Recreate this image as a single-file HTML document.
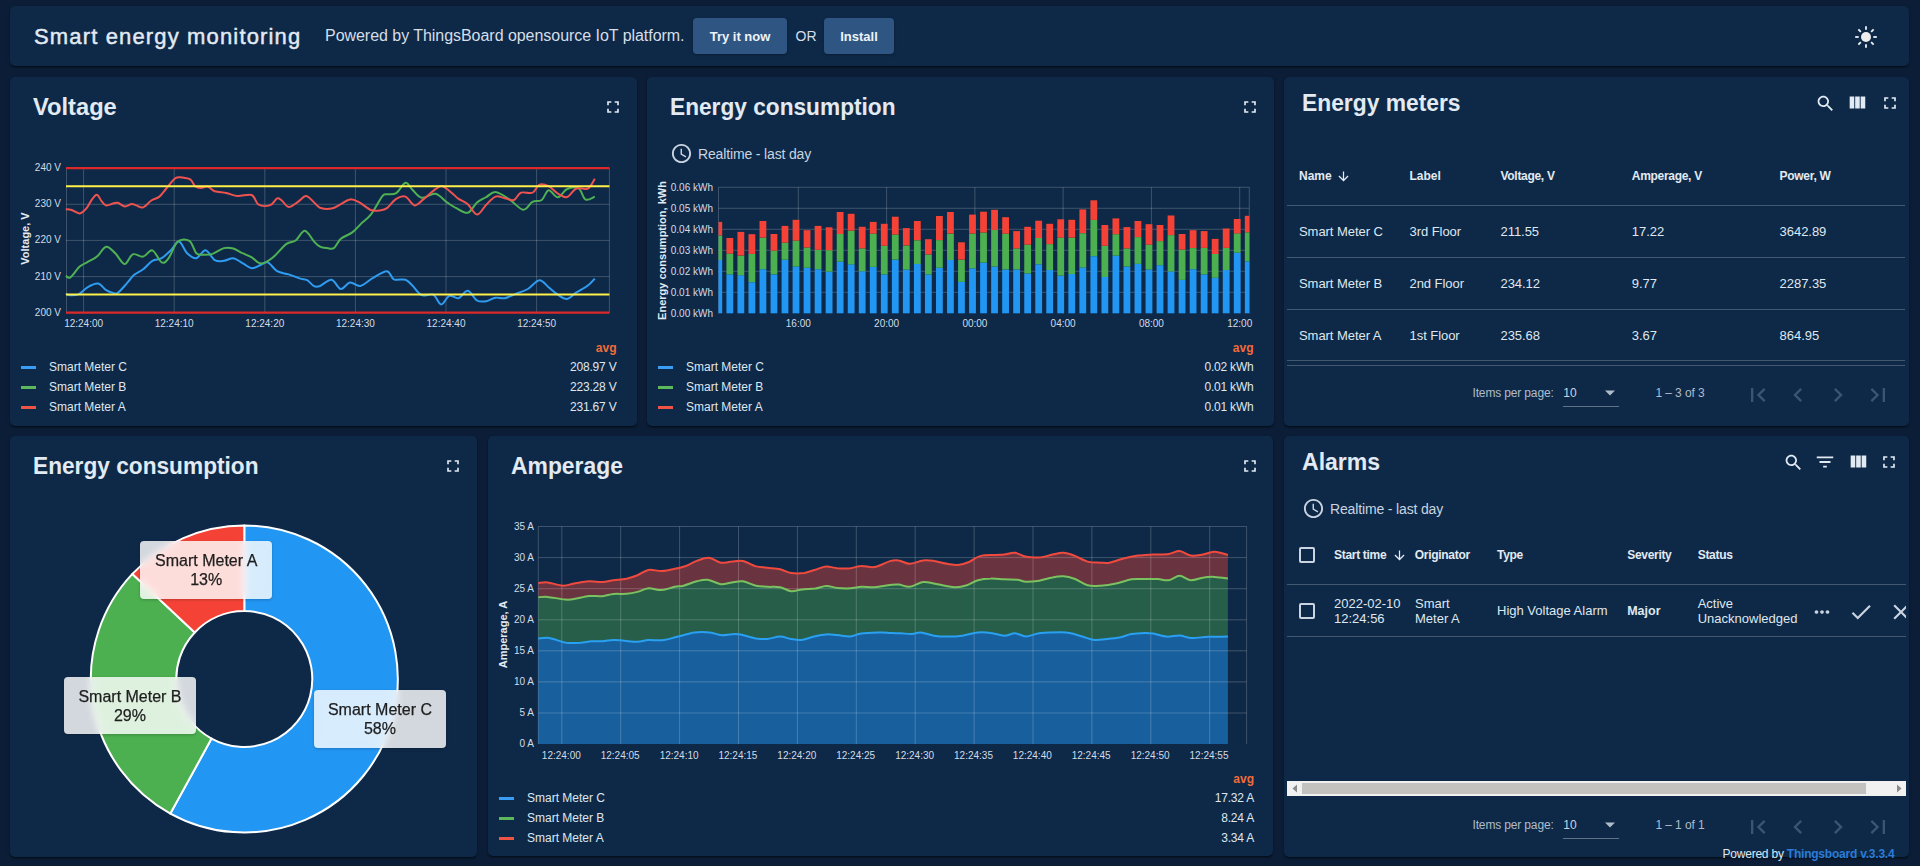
<!DOCTYPE html><html><head><meta charset="utf-8"><title>Smart energy monitoring</title><style>
html,body{margin:0;padding:0;}
body{width:1920px;height:866px;overflow:hidden;background:#0c1e37;font-family:"Liberation Sans", sans-serif;position:relative;}
.card{position:absolute;background:#0e2947;border-radius:5px;box-shadow:0 2px 2px -1px rgba(0,0,0,0.5),0 1px 3px rgba(0,0,0,0.3);}
.t{position:absolute;white-space:nowrap;line-height:1;}
.ic{position:absolute;}
.rot{transform:rotate(-90deg);}
.lg{position:absolute;width:15px;height:3px;}
.hl{position:absolute;height:1px;background:rgba(255,255,255,0.22);}
.cb{position:absolute;width:12px;height:12px;border:2px solid #c9d4e0;border-radius:2px;}
.pl{position:absolute;background:rgba(255,255,255,0.82);border-radius:4px;color:#1e1e1e;-webkit-text-stroke:0.25px #1e1e1e;backdrop-filter:blur(3px);box-shadow:0 1px 3px rgba(0,0,0,0.2);}
.yl{position:absolute;font-size:10px;line-height:12px;color:#d2dce7;white-space:nowrap;}
.xl{position:absolute;width:60px;text-align:center;font-size:10px;line-height:12px;color:#d2dce7;white-space:nowrap;}
.btn{position:absolute;background:#2f5683;border-radius:4px;box-shadow:0 1px 3px rgba(0,0,0,0.3);}
</style></head><body><div class="card" style="left:10px;top:6px;width:1899px;height:60px"></div>
<div class="card" style="left:10px;top:77px;width:627px;height:349px"></div>
<div class="card" style="left:647px;top:77px;width:627px;height:349px"></div>
<div class="card" style="left:1284px;top:77px;width:625px;height:349px"></div>
<div class="card" style="left:10px;top:436px;width:467px;height:421px"></div>
<div class="card" style="left:488px;top:436px;width:785px;height:420px"></div>
<div class="card" style="left:1284px;top:436px;width:625px;height:421px"></div>
<svg style="position:absolute;left:0;top:0" width="1920" height="866" viewBox="0 0 1920 866"><defs><clipPath id="bclip"><rect x="718.5" y="180" width="530.8" height="140"/></clipPath></defs><line x1="66" y1="204.3" x2="609.4" y2="204.3" stroke="rgba(255,255,255,0.2)" stroke-width="1"/>
<line x1="66" y1="240.4" x2="609.4" y2="240.4" stroke="rgba(255,255,255,0.2)" stroke-width="1"/>
<line x1="66" y1="276.6" x2="609.4" y2="276.6" stroke="rgba(255,255,255,0.2)" stroke-width="1"/>
<line x1="83.6" y1="168" x2="83.6" y2="313" stroke="rgba(255,255,255,0.2)" stroke-width="1"/>
<line x1="174.2" y1="168" x2="174.2" y2="313" stroke="rgba(255,255,255,0.2)" stroke-width="1"/>
<line x1="264.8" y1="168" x2="264.8" y2="313" stroke="rgba(255,255,255,0.2)" stroke-width="1"/>
<line x1="355.4" y1="168" x2="355.4" y2="313" stroke="rgba(255,255,255,0.2)" stroke-width="1"/>
<line x1="446.0" y1="168" x2="446.0" y2="313" stroke="rgba(255,255,255,0.2)" stroke-width="1"/>
<line x1="536.6" y1="168" x2="536.6" y2="313" stroke="rgba(255,255,255,0.2)" stroke-width="1"/>
<line x1="66.5" y1="168" x2="66.5" y2="313" stroke="rgba(255,255,255,0.2)" stroke-width="1"/>
<line x1="609.4" y1="168" x2="609.4" y2="313" stroke="rgba(255,255,255,0.2)" stroke-width="1"/>
<path d="M65.8 293.6 C66.4 293.8 67.2 295.1 69.3 295.2 C71.4 295.3 75.4 295.6 78.5 294.3 C81.6 292.9 84.5 288.9 87.8 287.1 C91.0 285.3 95.1 283.1 98.2 283.6 C101.2 284.1 103.7 288.6 106.2 290.1 C108.7 291.7 111.2 292.4 113.2 292.9 C115.1 293.3 115.5 294.5 117.8 292.9 C120.1 291.3 124.3 286.2 127.0 283.2 C129.7 280.2 131.3 277.4 133.9 275.1 C136.6 272.8 140.1 271.7 143.2 269.3 C146.3 266.9 149.3 262.6 152.4 260.8 C155.5 258.9 158.6 260.0 161.7 258.2 C164.7 256.5 168.0 252.9 170.9 250.2 C173.8 247.4 176.3 241.1 179.0 241.6 C181.7 242.1 184.2 250.4 187.1 253.2 C190.0 255.9 193.2 258.7 196.3 258.2 C199.4 257.7 202.5 249.9 205.5 250.2 C208.6 250.5 211.7 258.3 214.8 260.1 C217.9 261.9 220.9 261.1 224.0 260.8 C227.1 260.5 230.2 257.9 233.3 258.2 C236.3 258.6 239.4 261.4 242.5 263.1 C245.6 264.7 248.7 267.9 251.7 268.2 C254.8 268.4 258.3 265.7 261.0 264.7 C263.7 263.7 265.2 261.3 267.9 262.4 C270.6 263.5 273.7 269.2 277.1 271.2 C280.6 273.2 284.8 273.2 288.7 274.4 C292.5 275.6 297.2 277.6 300.2 278.6 C303.3 279.5 304.8 278.9 307.2 280.2 C309.5 281.5 311.9 285.2 314.1 286.2 C316.2 287.2 317.1 287.0 320.0 286.0 C322.9 284.9 328.1 279.2 331.5 279.7 C335.0 280.2 337.7 288.5 340.8 289.0 C343.9 289.4 346.8 283.0 350.0 282.5 C353.3 282.0 356.6 286.7 360.4 286.0 C364.3 285.2 368.7 280.3 373.1 277.9 C377.5 275.4 383.5 270.9 387.0 271.2 C390.4 271.4 390.8 277.8 393.9 279.3 C397.0 280.7 402.4 278.7 405.5 279.7 C408.5 280.8 409.7 282.9 412.4 285.5 C415.1 288.1 418.2 293.7 421.6 295.2 C425.1 296.7 429.9 293.2 433.2 294.7 C436.4 296.3 438.6 304.2 441.2 304.4 C443.9 304.6 446.4 296.9 449.3 295.9 C452.2 294.8 455.5 299.0 458.6 298.2 C461.6 297.4 464.7 290.4 467.8 290.8 C470.9 291.2 474.0 298.8 477.0 300.5 C480.1 302.2 483.2 301.7 486.3 301.2 C489.4 300.7 492.4 298.2 495.5 297.7 C498.6 297.2 501.3 298.9 504.8 298.2 C508.2 297.5 512.5 295.1 516.3 293.6 C520.2 292.0 524.0 291.2 527.9 289.0 C531.7 286.7 535.9 280.5 539.4 280.2 C542.9 279.9 545.6 284.9 548.6 287.3 C551.7 289.8 554.8 292.8 557.9 294.7 C561.0 296.7 564.0 299.3 567.1 298.9 C570.2 298.5 572.9 294.7 576.4 292.4 C579.8 290.2 584.8 287.8 587.9 285.5 C591.0 283.2 593.7 279.7 594.8 278.6" fill="none" stroke="#2f9cf2" stroke-width="2" stroke-linejoin="round"/>
<path d="M65.8 275.8 C66.6 276.1 68.1 279.0 70.4 277.4 C72.7 275.9 76.8 269.1 79.7 266.6 C82.6 264.0 84.9 263.6 87.8 261.9 C90.6 260.3 93.9 259.2 97.0 256.6 C100.1 254.1 103.2 247.2 106.2 246.7 C109.3 246.2 112.4 250.7 115.5 253.6 C118.6 256.5 121.8 263.9 124.7 264.0 C127.6 264.1 129.7 255.6 132.8 254.3 C135.9 253.1 139.9 257.3 143.2 256.6 C146.5 256.0 149.3 249.4 152.4 250.4 C155.5 251.4 159.0 261.1 161.7 262.4 C164.4 263.7 165.9 261.7 168.6 258.2 C171.3 254.8 174.4 244.5 177.8 241.6 C181.3 238.7 186.3 239.0 189.4 240.9 C192.5 242.8 194.0 250.9 196.3 253.2 C198.6 255.5 200.5 254.7 203.2 254.8 C205.9 254.9 209.0 255.0 212.5 253.9 C215.9 252.7 220.6 249.0 224.0 248.1 C227.5 247.2 230.2 247.7 233.3 248.5 C236.3 249.4 239.4 251.7 242.5 253.2 C245.6 254.6 248.7 255.6 251.7 257.3 C254.8 259.1 257.5 263.5 261.0 263.6 C264.4 263.6 268.3 261.1 272.5 257.8 C276.8 254.5 282.5 246.8 286.4 243.9 C290.2 241.0 292.5 242.7 295.6 240.5 C298.7 238.3 301.8 230.6 304.8 230.8 C307.9 231.0 311.6 239.0 314.1 241.6 C316.6 244.3 317.9 245.6 320.0 246.7 C322.1 247.8 324.6 247.9 326.9 248.1 C329.2 248.3 331.5 249.6 333.9 248.1 C336.2 246.5 337.7 241.5 340.8 238.8 C343.9 236.2 348.9 235.0 352.3 232.4 C355.8 229.8 358.5 226.1 361.6 223.1 C364.6 220.2 367.3 219.1 370.8 214.6 C374.3 210.1 379.7 199.5 382.4 196.1 C385.1 192.7 384.7 194.8 387.0 194.3 C389.3 193.8 393.1 195.0 396.2 193.1 C399.3 191.2 402.8 183.3 405.5 182.7 C408.1 182.1 409.7 187.2 412.4 189.7 C415.1 192.2 417.8 197.0 421.6 197.7 C425.5 198.4 431.2 193.0 435.5 193.8 C439.7 194.6 443.6 200.0 447.0 202.4 C450.5 204.7 452.8 206.4 456.3 208.1 C459.7 209.9 464.3 213.7 467.8 212.7 C471.3 211.8 474.0 205.0 477.0 202.4 C480.1 199.7 483.2 198.8 486.3 197.0 C489.4 195.3 491.7 191.6 495.5 192.0 C499.4 192.3 504.8 196.4 509.4 199.4 C514.0 202.3 519.4 209.3 523.2 209.7 C527.1 210.2 529.4 203.5 532.5 201.9 C535.6 200.3 539.0 202.0 541.7 200.0 C544.4 198.1 545.9 190.8 548.6 190.3 C551.3 189.9 554.8 197.5 557.9 197.3 C561.0 197.0 563.6 190.4 567.1 189.0 C570.6 187.5 575.6 186.7 578.7 188.5 C581.7 190.3 582.9 198.2 585.6 199.6 C588.3 200.9 593.3 197.1 594.8 196.6" fill="none" stroke="#4fb153" stroke-width="2" stroke-linejoin="round"/>
<path d="M65.8 209.3 C66.8 209.4 69.3 209.3 71.6 210.0 C73.9 210.7 77.2 213.7 79.7 213.4 C82.2 213.1 84.5 210.6 86.6 208.1 C88.7 205.7 90.6 201.1 92.4 198.9 C94.1 196.7 95.5 194.3 97.0 194.7 C98.5 195.1 100.1 199.4 101.6 201.2 C103.2 203.0 104.3 205.0 106.2 205.4 C108.2 205.7 111.2 203.9 113.2 203.5 C115.1 203.1 115.9 202.3 117.8 202.8 C119.7 203.3 122.4 206.3 124.7 206.5 C127.0 206.7 129.7 204.2 131.6 204.0 C133.6 203.8 134.3 204.8 136.3 205.4 C138.2 205.9 140.7 208.2 143.2 207.4 C145.7 206.6 148.6 202.3 151.3 200.5 C154.0 198.7 156.9 198.6 159.4 196.6 C161.9 194.6 163.6 191.6 166.3 188.5 C169.0 185.4 172.8 179.9 175.5 178.1 C178.2 176.3 179.9 177.4 182.4 177.6 C184.9 177.9 188.4 178.3 190.5 179.7 C192.6 181.1 193.4 184.8 195.2 186.2 C196.9 187.6 198.8 188.0 200.9 188.0 C203.0 188.1 205.5 186.1 207.9 186.7 C210.2 187.2 211.7 190.2 214.8 191.3 C217.9 192.3 222.5 192.3 226.3 193.1 C230.2 193.9 233.6 195.8 237.9 196.1 C242.1 196.4 248.3 193.5 251.7 195.0 C255.2 196.4 255.6 203.0 258.7 204.7 C261.7 206.4 267.1 206.2 270.2 205.1 C273.3 204.1 275.2 199.2 277.1 198.4 C279.1 197.7 279.8 199.1 281.8 200.5 C283.7 201.9 286.0 206.7 288.7 207.0 C291.4 207.2 295.0 203.7 297.9 201.9 C300.8 200.1 303.3 196.0 306.0 196.1 C308.7 196.2 311.8 200.4 314.1 202.4 C316.4 204.3 317.1 206.6 320.0 207.7 C322.9 208.7 328.1 209.2 331.5 208.6 C335.0 208.0 337.7 205.7 340.8 204.2 C343.9 202.7 346.9 199.7 350.0 199.4 C353.1 199.0 355.8 200.6 359.3 202.4 C362.7 204.1 367.3 208.6 370.8 210.0 C374.3 211.3 377.4 210.7 380.0 210.4 C382.7 210.1 384.3 210.1 387.0 208.1 C389.7 206.2 393.1 200.8 396.2 198.9 C399.3 197.0 402.4 195.5 405.5 196.6 C408.5 197.7 411.6 205.0 414.7 205.4 C417.8 205.7 420.5 201.6 423.9 198.9 C427.4 196.2 432.4 191.3 435.5 189.2 C438.6 187.1 439.7 185.6 442.4 186.2 C445.1 186.8 448.9 190.5 451.6 192.7 C454.3 194.8 455.9 197.0 458.6 198.9 C461.3 200.8 464.7 201.6 467.8 204.2 C470.9 206.8 474.0 214.5 477.0 214.6 C480.1 214.7 483.2 207.7 486.3 204.7 C489.4 201.7 492.4 197.7 495.5 196.6 C498.6 195.5 501.7 197.6 504.8 198.2 C507.8 198.8 511.3 201.0 514.0 200.0 C516.7 199.1 517.8 193.9 520.9 192.7 C524.0 191.4 529.4 194.0 532.5 192.7 C535.6 191.3 536.7 185.7 539.4 184.6 C542.1 183.5 545.6 184.7 548.6 186.2 C551.7 187.7 554.8 191.8 557.9 193.6 C561.0 195.4 564.0 197.9 567.1 197.0 C570.2 196.2 572.9 189.9 576.4 188.5 C579.8 187.1 584.8 190.1 587.9 188.5 C591.0 186.9 593.7 180.4 594.8 178.8" fill="none" stroke="#ef5350" stroke-width="2" stroke-linejoin="round"/>
<line x1="66" y1="186.3" x2="609.4" y2="186.3" stroke="#fff04a" stroke-width="2"/>
<line x1="66" y1="294.6" x2="609.4" y2="294.6" stroke="#fff04a" stroke-width="2"/>
<line x1="66" y1="168.2" x2="609.4" y2="168.2" stroke="#dc2a2a" stroke-width="2.2"/>
<line x1="66" y1="312.7" x2="609.4" y2="312.7" stroke="#dc2a2a" stroke-width="2.2"/>
<line x1="718.5" y1="292.3" x2="1249.3" y2="292.3" stroke="rgba(255,255,255,0.2)" stroke-width="1"/>
<line x1="718.5" y1="271.3" x2="1249.3" y2="271.3" stroke="rgba(255,255,255,0.2)" stroke-width="1"/>
<line x1="718.5" y1="250.3" x2="1249.3" y2="250.3" stroke="rgba(255,255,255,0.2)" stroke-width="1"/>
<line x1="718.5" y1="229.3" x2="1249.3" y2="229.3" stroke="rgba(255,255,255,0.2)" stroke-width="1"/>
<line x1="718.5" y1="208.3" x2="1249.3" y2="208.3" stroke="rgba(255,255,255,0.2)" stroke-width="1"/>
<line x1="718.5" y1="187.3" x2="1249.3" y2="187.3" stroke="rgba(255,255,255,0.2)" stroke-width="1"/>
<line x1="798.3" y1="187.3" x2="798.3" y2="313.3" stroke="rgba(255,255,255,0.2)" stroke-width="1"/>
<line x1="886.6" y1="187.3" x2="886.6" y2="313.3" stroke="rgba(255,255,255,0.2)" stroke-width="1"/>
<line x1="974.9" y1="187.3" x2="974.9" y2="313.3" stroke="rgba(255,255,255,0.2)" stroke-width="1"/>
<line x1="1063.1" y1="187.3" x2="1063.1" y2="313.3" stroke="rgba(255,255,255,0.2)" stroke-width="1"/>
<line x1="1151.4" y1="187.3" x2="1151.4" y2="313.3" stroke="rgba(255,255,255,0.2)" stroke-width="1"/>
<line x1="1239.7" y1="187.3" x2="1239.7" y2="313.3" stroke="rgba(255,255,255,0.2)" stroke-width="1"/>
<line x1="718.5" y1="187.3" x2="718.5" y2="313.3" stroke="rgba(255,255,255,0.2)"/>
<line x1="1249.3" y1="187.3" x2="1249.3" y2="313.3" stroke="rgba(255,255,255,0.2)"/>
<g clip-path="url(#bclip)">
<rect x="715.40" y="260.0" width="6.8" height="53.3" fill="#2196f3"/>
<rect x="715.40" y="235.4" width="6.8" height="24.6" fill="#4caf50"/>
<rect x="715.40" y="221.9" width="6.8" height="13.5" fill="#f44336"/>
<rect x="726.43" y="274.4" width="6.8" height="38.9" fill="#2196f3"/>
<rect x="726.43" y="253.6" width="6.8" height="20.8" fill="#4caf50"/>
<rect x="726.43" y="238.0" width="6.8" height="15.6" fill="#f44336"/>
<rect x="737.46" y="275.2" width="6.8" height="38.1" fill="#2196f3"/>
<rect x="737.46" y="255.7" width="6.8" height="19.6" fill="#4caf50"/>
<rect x="737.46" y="231.9" width="6.8" height="23.7" fill="#f44336"/>
<rect x="748.49" y="282.2" width="6.8" height="31.1" fill="#2196f3"/>
<rect x="748.49" y="253.9" width="6.8" height="28.2" fill="#4caf50"/>
<rect x="748.49" y="234.2" width="6.8" height="19.7" fill="#f44336"/>
<rect x="759.52" y="269.2" width="6.8" height="44.1" fill="#2196f3"/>
<rect x="759.52" y="237.7" width="6.8" height="31.5" fill="#4caf50"/>
<rect x="759.52" y="221.0" width="6.8" height="16.6" fill="#f44336"/>
<rect x="770.55" y="274.4" width="6.8" height="38.9" fill="#2196f3"/>
<rect x="770.55" y="250.6" width="6.8" height="23.7" fill="#4caf50"/>
<rect x="770.55" y="234.0" width="6.8" height="16.6" fill="#f44336"/>
<rect x="781.58" y="259.7" width="6.8" height="53.6" fill="#2196f3"/>
<rect x="781.58" y="242.7" width="6.8" height="17.0" fill="#4caf50"/>
<rect x="781.58" y="225.9" width="6.8" height="16.8" fill="#f44336"/>
<rect x="792.61" y="266.6" width="6.8" height="46.7" fill="#2196f3"/>
<rect x="792.61" y="240.6" width="6.8" height="26.0" fill="#4caf50"/>
<rect x="792.61" y="219.8" width="6.8" height="20.8" fill="#f44336"/>
<rect x="803.64" y="267.8" width="6.8" height="45.5" fill="#2196f3"/>
<rect x="803.64" y="247.5" width="6.8" height="20.3" fill="#4caf50"/>
<rect x="803.64" y="230.2" width="6.8" height="17.3" fill="#f44336"/>
<rect x="814.67" y="269.2" width="6.8" height="44.1" fill="#2196f3"/>
<rect x="814.67" y="249.8" width="6.8" height="19.4" fill="#4caf50"/>
<rect x="814.67" y="225.9" width="6.8" height="23.9" fill="#f44336"/>
<rect x="825.70" y="271.8" width="6.8" height="41.5" fill="#2196f3"/>
<rect x="825.70" y="250.1" width="6.8" height="21.6" fill="#4caf50"/>
<rect x="825.70" y="227.3" width="6.8" height="22.9" fill="#f44336"/>
<rect x="836.73" y="261.7" width="6.8" height="51.6" fill="#2196f3"/>
<rect x="836.73" y="234.0" width="6.8" height="27.7" fill="#4caf50"/>
<rect x="836.73" y="212.0" width="6.8" height="22.0" fill="#f44336"/>
<rect x="847.76" y="264.3" width="6.8" height="49.0" fill="#2196f3"/>
<rect x="847.76" y="230.6" width="6.8" height="33.8" fill="#4caf50"/>
<rect x="847.76" y="213.8" width="6.8" height="16.8" fill="#f44336"/>
<rect x="858.79" y="271.3" width="6.8" height="42.0" fill="#2196f3"/>
<rect x="858.79" y="248.4" width="6.8" height="22.9" fill="#4caf50"/>
<rect x="858.79" y="226.8" width="6.8" height="21.6" fill="#f44336"/>
<rect x="869.82" y="266.9" width="6.8" height="46.4" fill="#2196f3"/>
<rect x="869.82" y="233.7" width="6.8" height="33.2" fill="#4caf50"/>
<rect x="869.82" y="221.9" width="6.8" height="11.8" fill="#f44336"/>
<rect x="880.85" y="274.4" width="6.8" height="38.9" fill="#2196f3"/>
<rect x="880.85" y="245.8" width="6.8" height="28.6" fill="#4caf50"/>
<rect x="880.85" y="223.8" width="6.8" height="22.0" fill="#f44336"/>
<rect x="891.88" y="259.7" width="6.8" height="53.6" fill="#2196f3"/>
<rect x="891.88" y="234.5" width="6.8" height="25.1" fill="#4caf50"/>
<rect x="891.88" y="216.7" width="6.8" height="17.8" fill="#f44336"/>
<rect x="902.91" y="269.5" width="6.8" height="43.8" fill="#2196f3"/>
<rect x="902.91" y="245.5" width="6.8" height="24.1" fill="#4caf50"/>
<rect x="902.91" y="228.1" width="6.8" height="17.3" fill="#f44336"/>
<rect x="913.94" y="264.0" width="6.8" height="49.3" fill="#2196f3"/>
<rect x="913.94" y="240.3" width="6.8" height="23.7" fill="#4caf50"/>
<rect x="913.94" y="221.0" width="6.8" height="19.2" fill="#f44336"/>
<rect x="924.97" y="274.4" width="6.8" height="38.9" fill="#2196f3"/>
<rect x="924.97" y="254.5" width="6.8" height="19.9" fill="#4caf50"/>
<rect x="924.97" y="239.2" width="6.8" height="15.2" fill="#f44336"/>
<rect x="936.00" y="267.8" width="6.8" height="45.5" fill="#2196f3"/>
<rect x="936.00" y="240.1" width="6.8" height="27.7" fill="#4caf50"/>
<rect x="936.00" y="216.0" width="6.8" height="24.1" fill="#f44336"/>
<rect x="947.03" y="260.0" width="6.8" height="53.3" fill="#2196f3"/>
<rect x="947.03" y="233.7" width="6.8" height="26.3" fill="#4caf50"/>
<rect x="947.03" y="212.0" width="6.8" height="21.6" fill="#f44336"/>
<rect x="958.06" y="281.8" width="6.8" height="31.5" fill="#2196f3"/>
<rect x="958.06" y="259.7" width="6.8" height="22.2" fill="#4caf50"/>
<rect x="958.06" y="242.3" width="6.8" height="17.3" fill="#f44336"/>
<rect x="969.09" y="268.3" width="6.8" height="45.0" fill="#2196f3"/>
<rect x="969.09" y="233.7" width="6.8" height="34.6" fill="#4caf50"/>
<rect x="969.09" y="214.6" width="6.8" height="19.0" fill="#f44336"/>
<rect x="980.12" y="262.6" width="6.8" height="50.7" fill="#2196f3"/>
<rect x="980.12" y="232.5" width="6.8" height="30.1" fill="#4caf50"/>
<rect x="980.12" y="211.7" width="6.8" height="20.8" fill="#f44336"/>
<rect x="991.15" y="266.6" width="6.8" height="46.7" fill="#2196f3"/>
<rect x="991.15" y="229.9" width="6.8" height="36.7" fill="#4caf50"/>
<rect x="991.15" y="209.8" width="6.8" height="20.1" fill="#f44336"/>
<rect x="1002.18" y="269.5" width="6.8" height="43.8" fill="#2196f3"/>
<rect x="1002.18" y="233.7" width="6.8" height="35.8" fill="#4caf50"/>
<rect x="1002.18" y="217.2" width="6.8" height="16.5" fill="#f44336"/>
<rect x="1013.21" y="269.5" width="6.8" height="43.8" fill="#2196f3"/>
<rect x="1013.21" y="248.4" width="6.8" height="21.1" fill="#4caf50"/>
<rect x="1013.21" y="231.1" width="6.8" height="17.3" fill="#f44336"/>
<rect x="1024.24" y="273.5" width="6.8" height="39.8" fill="#2196f3"/>
<rect x="1024.24" y="244.6" width="6.8" height="28.9" fill="#4caf50"/>
<rect x="1024.24" y="226.8" width="6.8" height="17.8" fill="#f44336"/>
<rect x="1035.27" y="264.3" width="6.8" height="49.0" fill="#2196f3"/>
<rect x="1035.27" y="238.0" width="6.8" height="26.3" fill="#4caf50"/>
<rect x="1035.27" y="220.7" width="6.8" height="17.3" fill="#f44336"/>
<rect x="1046.30" y="270.0" width="6.8" height="43.3" fill="#2196f3"/>
<rect x="1046.30" y="244.1" width="6.8" height="26.0" fill="#4caf50"/>
<rect x="1046.30" y="223.8" width="6.8" height="20.3" fill="#f44336"/>
<rect x="1057.33" y="275.6" width="6.8" height="37.7" fill="#2196f3"/>
<rect x="1057.33" y="237.7" width="6.8" height="37.9" fill="#4caf50"/>
<rect x="1057.33" y="219.3" width="6.8" height="18.4" fill="#f44336"/>
<rect x="1068.36" y="274.0" width="6.8" height="39.3" fill="#2196f3"/>
<rect x="1068.36" y="237.7" width="6.8" height="36.4" fill="#4caf50"/>
<rect x="1068.36" y="219.8" width="6.8" height="17.8" fill="#f44336"/>
<rect x="1079.39" y="267.4" width="6.8" height="45.9" fill="#2196f3"/>
<rect x="1079.39" y="233.2" width="6.8" height="34.3" fill="#4caf50"/>
<rect x="1079.39" y="209.4" width="6.8" height="23.7" fill="#f44336"/>
<rect x="1090.42" y="256.2" width="6.8" height="57.1" fill="#2196f3"/>
<rect x="1090.42" y="219.8" width="6.8" height="36.4" fill="#4caf50"/>
<rect x="1090.42" y="200.3" width="6.8" height="19.6" fill="#f44336"/>
<rect x="1101.45" y="277.0" width="6.8" height="36.3" fill="#2196f3"/>
<rect x="1101.45" y="245.8" width="6.8" height="31.2" fill="#4caf50"/>
<rect x="1101.45" y="225.0" width="6.8" height="20.8" fill="#f44336"/>
<rect x="1112.48" y="255.7" width="6.8" height="57.6" fill="#2196f3"/>
<rect x="1112.48" y="234.2" width="6.8" height="21.5" fill="#4caf50"/>
<rect x="1112.48" y="218.4" width="6.8" height="15.8" fill="#f44336"/>
<rect x="1123.51" y="266.6" width="6.8" height="46.7" fill="#2196f3"/>
<rect x="1123.51" y="248.4" width="6.8" height="18.2" fill="#4caf50"/>
<rect x="1123.51" y="227.1" width="6.8" height="21.3" fill="#f44336"/>
<rect x="1134.54" y="264.0" width="6.8" height="49.3" fill="#2196f3"/>
<rect x="1134.54" y="237.1" width="6.8" height="26.8" fill="#4caf50"/>
<rect x="1134.54" y="221.0" width="6.8" height="16.1" fill="#f44336"/>
<rect x="1145.57" y="269.5" width="6.8" height="43.8" fill="#2196f3"/>
<rect x="1145.57" y="244.6" width="6.8" height="24.9" fill="#4caf50"/>
<rect x="1145.57" y="224.2" width="6.8" height="20.4" fill="#f44336"/>
<rect x="1156.60" y="265.2" width="6.8" height="48.1" fill="#2196f3"/>
<rect x="1156.60" y="241.1" width="6.8" height="24.1" fill="#4caf50"/>
<rect x="1156.60" y="225.0" width="6.8" height="16.1" fill="#f44336"/>
<rect x="1167.63" y="271.4" width="6.8" height="41.9" fill="#2196f3"/>
<rect x="1167.63" y="235.1" width="6.8" height="36.4" fill="#4caf50"/>
<rect x="1167.63" y="215.5" width="6.8" height="19.6" fill="#f44336"/>
<rect x="1178.66" y="279.9" width="6.8" height="33.4" fill="#2196f3"/>
<rect x="1178.66" y="249.6" width="6.8" height="30.3" fill="#4caf50"/>
<rect x="1178.66" y="234.0" width="6.8" height="15.6" fill="#f44336"/>
<rect x="1189.69" y="269.2" width="6.8" height="44.1" fill="#2196f3"/>
<rect x="1189.69" y="248.1" width="6.8" height="21.1" fill="#4caf50"/>
<rect x="1189.69" y="230.2" width="6.8" height="17.8" fill="#f44336"/>
<rect x="1200.72" y="274.4" width="6.8" height="38.9" fill="#2196f3"/>
<rect x="1200.72" y="247.9" width="6.8" height="26.5" fill="#4caf50"/>
<rect x="1200.72" y="231.1" width="6.8" height="16.8" fill="#f44336"/>
<rect x="1211.75" y="277.8" width="6.8" height="35.5" fill="#2196f3"/>
<rect x="1211.75" y="253.9" width="6.8" height="23.9" fill="#4caf50"/>
<rect x="1211.75" y="238.9" width="6.8" height="15.1" fill="#f44336"/>
<rect x="1222.78" y="270.0" width="6.8" height="43.3" fill="#2196f3"/>
<rect x="1222.78" y="247.9" width="6.8" height="22.2" fill="#4caf50"/>
<rect x="1222.78" y="228.5" width="6.8" height="19.4" fill="#f44336"/>
<rect x="1233.81" y="252.7" width="6.8" height="60.6" fill="#2196f3"/>
<rect x="1233.81" y="233.3" width="6.8" height="19.4" fill="#4caf50"/>
<rect x="1233.81" y="219.0" width="6.8" height="14.4" fill="#f44336"/>
<rect x="1244.84" y="261.4" width="6.8" height="51.9" fill="#2196f3"/>
<rect x="1244.84" y="232.3" width="6.8" height="29.1" fill="#4caf50"/>
<rect x="1244.84" y="215.8" width="6.8" height="16.5" fill="#f44336"/>
</g>
<path d="M538.3 583.1 C539.9 583.0 543.5 582.0 547.6 582.4 C551.7 582.9 558.5 585.5 562.9 585.7 C567.3 585.9 569.5 584.2 573.9 583.5 C578.3 582.8 584.5 581.6 589.2 581.3 C594.0 581.1 598.4 582.2 602.4 582.0 C606.4 581.8 609.4 580.8 613.4 580.2 C617.4 579.7 622.5 579.5 626.6 578.7 C630.6 577.8 633.9 576.6 637.5 575.2 C641.2 573.7 644.5 570.6 648.5 569.9 C652.5 569.2 657.3 571.2 661.7 571.0 C666.1 570.8 670.8 569.7 674.8 568.8 C678.9 568.0 682.1 567.3 685.8 566.0 C689.5 564.6 692.9 562.3 696.8 560.9 C700.6 559.6 704.8 557.5 708.8 557.8 C712.9 558.1 717.1 562.0 720.9 562.7 C724.8 563.3 728.2 561.8 731.9 561.6 C735.5 561.3 738.8 560.3 742.9 561.1 C746.9 561.9 752.0 565.3 756.0 566.4 C760.0 567.5 763.0 567.2 767.0 567.7 C771.0 568.2 776.1 568.4 780.2 569.2 C784.2 570.1 787.1 572.4 791.1 573.0 C795.2 573.6 800.3 573.5 804.3 573.0 C808.3 572.4 811.6 570.7 815.3 569.7 C818.9 568.6 822.6 566.9 826.2 566.6 C829.9 566.4 833.2 567.9 837.2 568.2 C841.2 568.4 846.4 568.5 850.4 568.2 C854.4 567.8 857.3 566.1 861.4 566.0 C865.4 565.8 869.8 567.9 874.5 567.1 C879.3 566.3 886.0 562.2 890.0 561.1 C894.0 560.0 895.5 560.0 898.8 560.5 C902.1 560.9 905.7 563.8 909.7 563.8 C913.8 563.8 918.9 560.9 922.9 560.5 C926.9 560.0 929.9 560.4 933.9 560.9 C937.9 561.5 943.0 563.1 947.1 563.8 C951.1 564.4 954.4 565.2 958.0 564.9 C961.7 564.6 965.3 563.5 969.0 562.0 C972.7 560.5 975.6 557.3 980.0 556.1 C984.4 554.9 991.3 555.2 995.3 555.0 C999.4 554.7 1000.8 554.9 1004.1 554.5 C1007.4 554.2 1011.4 552.4 1015.1 552.8 C1018.7 553.2 1021.7 556.0 1026.1 556.7 C1030.4 557.5 1037.0 557.5 1041.4 557.2 C1045.8 556.8 1048.7 555.3 1052.4 554.5 C1056.0 553.8 1059.7 552.6 1063.4 552.8 C1067.0 553.0 1070.3 554.2 1074.3 555.6 C1078.4 557.1 1083.1 560.4 1087.5 561.6 C1091.9 562.7 1097.0 562.5 1100.7 562.7 C1104.3 562.8 1105.8 563.3 1109.4 562.7 C1113.1 562.0 1117.9 559.9 1122.6 558.7 C1127.4 557.5 1132.8 556.3 1138.0 555.6 C1143.1 554.9 1148.2 554.8 1153.3 554.5 C1158.5 554.3 1164.3 554.5 1168.7 553.9 C1173.1 553.3 1176.0 550.7 1179.7 551.0 C1183.3 551.3 1186.6 555.1 1190.6 555.6 C1194.7 556.2 1199.8 555.0 1203.8 554.3 C1207.8 553.7 1210.8 551.6 1214.8 551.7 C1218.8 551.8 1225.7 554.4 1227.9 555.0 L1227.9 578.5 C1225.7 578.2 1218.8 577.1 1214.8 576.9 C1210.8 576.7 1207.8 576.8 1203.8 577.4 C1199.8 577.9 1194.7 580.5 1190.6 580.2 C1186.6 580.0 1183.3 575.8 1179.7 575.8 C1176.0 575.8 1172.3 579.7 1168.7 580.2 C1165.0 580.8 1161.7 579.3 1157.7 579.1 C1153.7 578.9 1148.9 579.1 1144.6 579.1 C1140.2 579.2 1136.1 578.6 1131.4 579.3 C1126.6 580.1 1121.1 582.5 1116.0 583.5 C1110.9 584.6 1105.4 585.4 1100.7 585.7 C1095.9 586.0 1091.9 586.4 1087.5 585.3 C1083.1 584.1 1078.4 580.2 1074.3 578.7 C1070.3 577.2 1067.0 576.5 1063.4 576.3 C1059.7 576.1 1056.4 576.6 1052.4 577.4 C1048.4 578.1 1043.6 579.9 1039.2 580.7 C1034.8 581.4 1029.7 581.9 1026.1 581.8 C1022.4 581.6 1020.9 580.2 1017.3 579.8 C1013.6 579.4 1008.5 579.6 1004.1 579.3 C999.7 579.1 995.3 578.3 990.9 578.5 C986.6 578.6 981.8 579.1 977.8 580.2 C973.8 581.4 970.5 584.1 966.8 585.3 C963.1 586.4 959.5 587.2 955.8 587.2 C952.2 587.3 948.5 586.3 944.9 585.7 C941.2 585.1 937.5 584.1 933.9 583.5 C930.2 582.9 926.9 581.4 922.9 582.0 C918.9 582.5 913.8 586.4 909.7 586.8 C905.7 587.2 902.1 584.9 898.8 584.6 C895.5 584.3 894.0 584.6 890.0 585.0 C886.0 585.5 879.3 587.0 874.5 587.2 C869.8 587.5 865.4 586.6 861.4 586.8 C857.3 587.0 854.4 588.2 850.4 588.3 C846.4 588.5 841.2 588.3 837.2 587.9 C833.2 587.5 829.9 585.8 826.2 585.9 C822.6 586.0 819.3 588.0 815.3 588.6 C811.3 589.1 806.1 589.0 802.1 589.4 C798.1 589.9 794.8 591.6 791.1 591.2 C787.5 590.8 784.2 588.0 780.2 587.2 C776.1 586.5 771.0 587.1 767.0 586.8 C763.0 586.5 760.0 586.6 756.0 585.7 C752.0 584.8 746.9 581.9 742.9 581.3 C738.8 580.8 735.5 581.9 731.9 582.4 C728.2 582.9 724.9 584.6 720.9 584.2 C716.9 583.7 711.8 580.3 707.7 579.8 C703.7 579.3 700.8 580.3 696.8 581.3 C692.8 582.3 687.3 584.8 683.6 585.7 C680.0 586.6 678.5 586.1 674.8 586.8 C671.2 587.5 666.1 589.8 661.7 590.1 C657.3 590.4 652.5 588.0 648.5 588.3 C644.5 588.6 641.2 590.9 637.5 591.9 C633.9 592.8 630.6 593.5 626.6 593.8 C622.5 594.2 617.4 593.6 613.4 594.0 C609.4 594.4 606.4 595.9 602.4 596.2 C598.4 596.6 594.0 595.5 589.2 596.0 C584.5 596.5 577.9 598.5 573.9 599.1 C569.9 599.7 569.5 599.9 565.1 599.5 C560.7 599.2 552.0 597.3 547.6 596.9 C543.1 596.5 539.9 597.3 538.3 597.3 Z" fill="#f44336" fill-opacity="0.4"/>
<path d="M538.3 597.3 C539.9 597.3 543.1 596.5 547.6 596.9 C552.0 597.3 560.7 599.2 565.1 599.5 C569.5 599.9 569.9 599.7 573.9 599.1 C577.9 598.5 584.5 596.5 589.2 596.0 C594.0 595.5 598.4 596.6 602.4 596.2 C606.4 595.9 609.4 594.4 613.4 594.0 C617.4 593.6 622.5 594.2 626.6 593.8 C630.6 593.5 633.9 592.8 637.5 591.9 C641.2 590.9 644.5 588.6 648.5 588.3 C652.5 588.0 657.3 590.4 661.7 590.1 C666.1 589.8 671.2 587.5 674.8 586.8 C678.5 586.1 680.0 586.6 683.6 585.7 C687.3 584.8 692.8 582.3 696.8 581.3 C700.8 580.3 703.7 579.3 707.7 579.8 C711.8 580.3 716.9 583.7 720.9 584.2 C724.9 584.6 728.2 582.9 731.9 582.4 C735.5 581.9 738.8 580.8 742.9 581.3 C746.9 581.9 752.0 584.8 756.0 585.7 C760.0 586.6 763.0 586.5 767.0 586.8 C771.0 587.1 776.1 586.5 780.2 587.2 C784.2 588.0 787.5 590.8 791.1 591.2 C794.8 591.6 798.1 589.9 802.1 589.4 C806.1 589.0 811.3 589.1 815.3 588.6 C819.3 588.0 822.6 586.0 826.2 585.9 C829.9 585.8 833.2 587.5 837.2 587.9 C841.2 588.3 846.4 588.5 850.4 588.3 C854.4 588.2 857.3 587.0 861.4 586.8 C865.4 586.6 869.8 587.5 874.5 587.2 C879.3 587.0 886.0 585.5 890.0 585.0 C894.0 584.6 895.5 584.3 898.8 584.6 C902.1 584.9 905.7 587.2 909.7 586.8 C913.8 586.4 918.9 582.5 922.9 582.0 C926.9 581.4 930.2 582.9 933.9 583.5 C937.5 584.1 941.2 585.1 944.9 585.7 C948.5 586.3 952.2 587.3 955.8 587.2 C959.5 587.2 963.1 586.4 966.8 585.3 C970.5 584.1 973.8 581.4 977.8 580.2 C981.8 579.1 986.6 578.6 990.9 578.5 C995.3 578.3 999.7 579.1 1004.1 579.3 C1008.5 579.6 1013.6 579.4 1017.3 579.8 C1020.9 580.2 1022.4 581.6 1026.1 581.8 C1029.7 581.9 1034.8 581.4 1039.2 580.7 C1043.6 579.9 1048.4 578.1 1052.4 577.4 C1056.4 576.6 1059.7 576.1 1063.4 576.3 C1067.0 576.5 1070.3 577.2 1074.3 578.7 C1078.4 580.2 1083.1 584.1 1087.5 585.3 C1091.9 586.4 1095.9 586.0 1100.7 585.7 C1105.4 585.4 1110.9 584.6 1116.0 583.5 C1121.1 582.5 1126.6 580.1 1131.4 579.3 C1136.1 578.6 1140.2 579.2 1144.6 579.1 C1148.9 579.1 1153.7 578.9 1157.7 579.1 C1161.7 579.3 1165.0 580.8 1168.7 580.2 C1172.3 579.7 1176.0 575.8 1179.7 575.8 C1183.3 575.8 1186.6 580.0 1190.6 580.2 C1194.7 580.5 1199.8 577.9 1203.8 577.4 C1207.8 576.8 1210.8 576.7 1214.8 576.9 C1218.8 577.1 1225.7 578.2 1227.9 578.5 L1227.9 636.6 C1224.6 636.7 1214.4 636.6 1208.2 636.8 C1202.0 637.1 1195.4 638.2 1190.6 637.9 C1185.9 637.7 1183.7 635.7 1179.7 635.5 C1175.6 635.3 1170.9 636.9 1166.5 636.6 C1162.1 636.3 1157.0 634.2 1153.3 633.5 C1149.7 632.9 1148.2 632.8 1144.6 632.9 C1140.9 633.0 1135.4 633.3 1131.4 634.0 C1127.4 634.7 1124.4 636.4 1120.4 637.3 C1116.4 638.1 1111.6 638.6 1107.2 639.0 C1102.9 639.5 1098.1 640.3 1094.1 639.9 C1090.1 639.5 1086.8 637.9 1083.1 636.8 C1079.5 635.8 1075.8 634.3 1072.1 633.5 C1068.5 632.8 1066.7 632.3 1061.2 632.2 C1055.7 632.2 1045.1 632.6 1039.2 633.3 C1033.4 634.0 1030.1 636.4 1026.1 636.4 C1022.0 636.4 1018.7 633.4 1015.1 633.3 C1011.4 633.2 1008.1 635.8 1004.1 635.7 C1000.1 635.7 995.3 633.4 990.9 632.9 C986.6 632.3 982.5 632.0 977.8 632.4 C973.0 632.9 967.5 635.0 962.4 635.7 C957.3 636.4 951.8 636.6 947.1 636.6 C942.3 636.6 938.3 636.4 933.9 635.7 C929.5 635.0 924.4 632.7 920.7 632.4 C917.1 632.2 915.2 633.8 911.9 634.0 C908.7 634.1 904.6 633.5 901.0 633.3 C897.3 633.1 893.3 633.0 890.0 632.9 C886.7 632.7 885.9 632.3 881.1 632.4 C876.3 632.6 866.5 632.9 861.4 633.5 C856.2 634.2 854.4 636.1 850.4 636.4 C846.4 636.7 841.2 635.4 837.2 635.1 C833.2 634.8 829.9 634.2 826.2 634.4 C822.6 634.6 819.3 635.3 815.3 636.2 C811.3 637.1 806.1 639.4 802.1 639.9 C798.1 640.4 794.8 639.6 791.1 639.0 C787.5 638.5 784.2 636.6 780.2 636.6 C776.1 636.6 771.0 638.7 767.0 639.0 C763.0 639.3 760.4 639.1 756.0 638.4 C751.6 637.6 744.7 635.3 740.7 634.6 C736.6 633.9 735.2 634.1 731.9 634.2 C728.6 634.3 724.6 635.4 720.9 635.1 C717.3 634.8 714.3 632.9 709.9 632.4 C705.6 632.0 700.1 631.7 694.6 632.4 C689.1 633.2 682.1 635.6 677.0 636.8 C671.9 638.1 668.6 639.6 663.9 640.1 C659.1 640.7 652.9 639.9 648.5 640.1 C644.1 640.4 641.5 641.6 637.5 641.7 C633.5 641.8 628.4 641.1 624.4 640.8 C620.3 640.5 617.0 639.8 613.4 639.9 C609.7 640.0 606.1 641.0 602.4 641.2 C598.8 641.4 595.1 641.0 591.4 641.2 C587.8 641.5 584.7 642.5 580.5 642.8 C576.3 643.0 570.2 643.2 566.2 642.8 C562.2 642.3 559.4 640.8 556.3 639.9 C553.2 639.1 550.6 638.0 547.6 637.7 C544.6 637.5 539.9 638.3 538.3 638.4 Z" fill="#4caf50" fill-opacity="0.4"/>
<path d="M538.3 638.4 C539.9 638.3 544.6 637.5 547.6 637.7 C550.6 638.0 553.2 639.1 556.3 639.9 C559.4 640.8 562.2 642.3 566.2 642.8 C570.2 643.2 576.3 643.0 580.5 642.8 C584.7 642.5 587.8 641.5 591.4 641.2 C595.1 641.0 598.8 641.4 602.4 641.2 C606.1 641.0 609.7 640.0 613.4 639.9 C617.0 639.8 620.3 640.5 624.4 640.8 C628.4 641.1 633.5 641.8 637.5 641.7 C641.5 641.6 644.1 640.4 648.5 640.1 C652.9 639.9 659.1 640.7 663.9 640.1 C668.6 639.6 671.9 638.1 677.0 636.8 C682.1 635.6 689.1 633.2 694.6 632.4 C700.1 631.7 705.6 632.0 709.9 632.4 C714.3 632.9 717.3 634.8 720.9 635.1 C724.6 635.4 728.6 634.3 731.9 634.2 C735.2 634.1 736.6 633.9 740.7 634.6 C744.7 635.3 751.6 637.6 756.0 638.4 C760.4 639.1 763.0 639.3 767.0 639.0 C771.0 638.7 776.1 636.6 780.2 636.6 C784.2 636.6 787.5 638.5 791.1 639.0 C794.8 639.6 798.1 640.4 802.1 639.9 C806.1 639.4 811.3 637.1 815.3 636.2 C819.3 635.3 822.6 634.6 826.2 634.4 C829.9 634.2 833.2 634.8 837.2 635.1 C841.2 635.4 846.4 636.7 850.4 636.4 C854.4 636.1 856.2 634.2 861.4 633.5 C866.5 632.9 876.3 632.6 881.1 632.4 C885.9 632.3 886.7 632.7 890.0 632.9 C893.3 633.0 897.3 633.1 901.0 633.3 C904.6 633.5 908.7 634.1 911.9 634.0 C915.2 633.8 917.1 632.2 920.7 632.4 C924.4 632.7 929.5 635.0 933.9 635.7 C938.3 636.4 942.3 636.6 947.1 636.6 C951.8 636.6 957.3 636.4 962.4 635.7 C967.5 635.0 973.0 632.9 977.8 632.4 C982.5 632.0 986.6 632.3 990.9 632.9 C995.3 633.4 1000.1 635.7 1004.1 635.7 C1008.1 635.8 1011.4 633.2 1015.1 633.3 C1018.7 633.4 1022.0 636.4 1026.1 636.4 C1030.1 636.4 1033.4 634.0 1039.2 633.3 C1045.1 632.6 1055.7 632.2 1061.2 632.2 C1066.7 632.3 1068.5 632.8 1072.1 633.5 C1075.8 634.3 1079.5 635.8 1083.1 636.8 C1086.8 637.9 1090.1 639.5 1094.1 639.9 C1098.1 640.3 1102.9 639.5 1107.2 639.0 C1111.6 638.6 1116.4 638.1 1120.4 637.3 C1124.4 636.4 1127.4 634.7 1131.4 634.0 C1135.4 633.3 1140.9 633.0 1144.6 632.9 C1148.2 632.8 1149.7 632.9 1153.3 633.5 C1157.0 634.2 1162.1 636.3 1166.5 636.6 C1170.9 636.9 1175.6 635.3 1179.7 635.5 C1183.7 635.7 1185.9 637.7 1190.6 637.9 C1195.4 638.2 1202.0 637.1 1208.2 636.8 C1214.4 636.6 1224.6 636.7 1227.9 636.6 L1227.9 744.1 L538.3 744.1 Z" fill="#2196f3" fill-opacity="0.5"/>
<line x1="538.3" y1="713.0" x2="1246.6" y2="713.0" stroke="rgba(255,255,255,0.2)"/>
<line x1="538.3" y1="681.9" x2="1246.6" y2="681.9" stroke="rgba(255,255,255,0.2)"/>
<line x1="538.3" y1="650.8" x2="1246.6" y2="650.8" stroke="rgba(255,255,255,0.2)"/>
<line x1="538.3" y1="619.8" x2="1246.6" y2="619.8" stroke="rgba(255,255,255,0.2)"/>
<line x1="538.3" y1="588.7" x2="1246.6" y2="588.7" stroke="rgba(255,255,255,0.2)"/>
<line x1="538.3" y1="557.6" x2="1246.6" y2="557.6" stroke="rgba(255,255,255,0.2)"/>
<line x1="538.3" y1="526.5" x2="1246.6" y2="526.5" stroke="rgba(255,255,255,0.2)"/>
<line x1="561.8" y1="526.5" x2="561.8" y2="744.1" stroke="rgba(255,255,255,0.2)"/>
<line x1="620.7" y1="526.5" x2="620.7" y2="744.1" stroke="rgba(255,255,255,0.2)"/>
<line x1="679.6" y1="526.5" x2="679.6" y2="744.1" stroke="rgba(255,255,255,0.2)"/>
<line x1="738.5" y1="526.5" x2="738.5" y2="744.1" stroke="rgba(255,255,255,0.2)"/>
<line x1="797.4" y1="526.5" x2="797.4" y2="744.1" stroke="rgba(255,255,255,0.2)"/>
<line x1="856.3" y1="526.5" x2="856.3" y2="744.1" stroke="rgba(255,255,255,0.2)"/>
<line x1="915.2" y1="526.5" x2="915.2" y2="744.1" stroke="rgba(255,255,255,0.2)"/>
<line x1="974.1" y1="526.5" x2="974.1" y2="744.1" stroke="rgba(255,255,255,0.2)"/>
<line x1="1033.0" y1="526.5" x2="1033.0" y2="744.1" stroke="rgba(255,255,255,0.2)"/>
<line x1="1091.9" y1="526.5" x2="1091.9" y2="744.1" stroke="rgba(255,255,255,0.2)"/>
<line x1="1150.8" y1="526.5" x2="1150.8" y2="744.1" stroke="rgba(255,255,255,0.2)"/>
<line x1="1209.7" y1="526.5" x2="1209.7" y2="744.1" stroke="rgba(255,255,255,0.2)"/>
<line x1="538.3" y1="526.5" x2="538.3" y2="744.1" stroke="rgba(255,255,255,0.2)"/>
<line x1="1246.6" y1="526.5" x2="1246.6" y2="744.1" stroke="rgba(255,255,255,0.2)"/>
<path d="M538.3 638.4 C539.9 638.3 544.6 637.5 547.6 637.7 C550.6 638.0 553.2 639.1 556.3 639.9 C559.4 640.8 562.2 642.3 566.2 642.8 C570.2 643.2 576.3 643.0 580.5 642.8 C584.7 642.5 587.8 641.5 591.4 641.2 C595.1 641.0 598.8 641.4 602.4 641.2 C606.1 641.0 609.7 640.0 613.4 639.9 C617.0 639.8 620.3 640.5 624.4 640.8 C628.4 641.1 633.5 641.8 637.5 641.7 C641.5 641.6 644.1 640.4 648.5 640.1 C652.9 639.9 659.1 640.7 663.9 640.1 C668.6 639.6 671.9 638.1 677.0 636.8 C682.1 635.6 689.1 633.2 694.6 632.4 C700.1 631.7 705.6 632.0 709.9 632.4 C714.3 632.9 717.3 634.8 720.9 635.1 C724.6 635.4 728.6 634.3 731.9 634.2 C735.2 634.1 736.6 633.9 740.7 634.6 C744.7 635.3 751.6 637.6 756.0 638.4 C760.4 639.1 763.0 639.3 767.0 639.0 C771.0 638.7 776.1 636.6 780.2 636.6 C784.2 636.6 787.5 638.5 791.1 639.0 C794.8 639.6 798.1 640.4 802.1 639.9 C806.1 639.4 811.3 637.1 815.3 636.2 C819.3 635.3 822.6 634.6 826.2 634.4 C829.9 634.2 833.2 634.8 837.2 635.1 C841.2 635.4 846.4 636.7 850.4 636.4 C854.4 636.1 856.2 634.2 861.4 633.5 C866.5 632.9 876.3 632.6 881.1 632.4 C885.9 632.3 886.7 632.7 890.0 632.9 C893.3 633.0 897.3 633.1 901.0 633.3 C904.6 633.5 908.7 634.1 911.9 634.0 C915.2 633.8 917.1 632.2 920.7 632.4 C924.4 632.7 929.5 635.0 933.9 635.7 C938.3 636.4 942.3 636.6 947.1 636.6 C951.8 636.6 957.3 636.4 962.4 635.7 C967.5 635.0 973.0 632.9 977.8 632.4 C982.5 632.0 986.6 632.3 990.9 632.9 C995.3 633.4 1000.1 635.7 1004.1 635.7 C1008.1 635.8 1011.4 633.2 1015.1 633.3 C1018.7 633.4 1022.0 636.4 1026.1 636.4 C1030.1 636.4 1033.4 634.0 1039.2 633.3 C1045.1 632.6 1055.7 632.2 1061.2 632.2 C1066.7 632.3 1068.5 632.8 1072.1 633.5 C1075.8 634.3 1079.5 635.8 1083.1 636.8 C1086.8 637.9 1090.1 639.5 1094.1 639.9 C1098.1 640.3 1102.9 639.5 1107.2 639.0 C1111.6 638.6 1116.4 638.1 1120.4 637.3 C1124.4 636.4 1127.4 634.7 1131.4 634.0 C1135.4 633.3 1140.9 633.0 1144.6 632.9 C1148.2 632.8 1149.7 632.9 1153.3 633.5 C1157.0 634.2 1162.1 636.3 1166.5 636.6 C1170.9 636.9 1175.6 635.3 1179.7 635.5 C1183.7 635.7 1185.9 637.7 1190.6 637.9 C1195.4 638.2 1202.0 637.1 1208.2 636.8 C1214.4 636.6 1224.6 636.7 1227.9 636.6" fill="none" stroke="#2aa0f2" stroke-width="2"/>
<path d="M538.3 597.3 C539.9 597.3 543.1 596.5 547.6 596.9 C552.0 597.3 560.7 599.2 565.1 599.5 C569.5 599.9 569.9 599.7 573.9 599.1 C577.9 598.5 584.5 596.5 589.2 596.0 C594.0 595.5 598.4 596.6 602.4 596.2 C606.4 595.9 609.4 594.4 613.4 594.0 C617.4 593.6 622.5 594.2 626.6 593.8 C630.6 593.5 633.9 592.8 637.5 591.9 C641.2 590.9 644.5 588.6 648.5 588.3 C652.5 588.0 657.3 590.4 661.7 590.1 C666.1 589.8 671.2 587.5 674.8 586.8 C678.5 586.1 680.0 586.6 683.6 585.7 C687.3 584.8 692.8 582.3 696.8 581.3 C700.8 580.3 703.7 579.3 707.7 579.8 C711.8 580.3 716.9 583.7 720.9 584.2 C724.9 584.6 728.2 582.9 731.9 582.4 C735.5 581.9 738.8 580.8 742.9 581.3 C746.9 581.9 752.0 584.8 756.0 585.7 C760.0 586.6 763.0 586.5 767.0 586.8 C771.0 587.1 776.1 586.5 780.2 587.2 C784.2 588.0 787.5 590.8 791.1 591.2 C794.8 591.6 798.1 589.9 802.1 589.4 C806.1 589.0 811.3 589.1 815.3 588.6 C819.3 588.0 822.6 586.0 826.2 585.9 C829.9 585.8 833.2 587.5 837.2 587.9 C841.2 588.3 846.4 588.5 850.4 588.3 C854.4 588.2 857.3 587.0 861.4 586.8 C865.4 586.6 869.8 587.5 874.5 587.2 C879.3 587.0 886.0 585.5 890.0 585.0 C894.0 584.6 895.5 584.3 898.8 584.6 C902.1 584.9 905.7 587.2 909.7 586.8 C913.8 586.4 918.9 582.5 922.9 582.0 C926.9 581.4 930.2 582.9 933.9 583.5 C937.5 584.1 941.2 585.1 944.9 585.7 C948.5 586.3 952.2 587.3 955.8 587.2 C959.5 587.2 963.1 586.4 966.8 585.3 C970.5 584.1 973.8 581.4 977.8 580.2 C981.8 579.1 986.6 578.6 990.9 578.5 C995.3 578.3 999.7 579.1 1004.1 579.3 C1008.5 579.6 1013.6 579.4 1017.3 579.8 C1020.9 580.2 1022.4 581.6 1026.1 581.8 C1029.7 581.9 1034.8 581.4 1039.2 580.7 C1043.6 579.9 1048.4 578.1 1052.4 577.4 C1056.4 576.6 1059.7 576.1 1063.4 576.3 C1067.0 576.5 1070.3 577.2 1074.3 578.7 C1078.4 580.2 1083.1 584.1 1087.5 585.3 C1091.9 586.4 1095.9 586.0 1100.7 585.7 C1105.4 585.4 1110.9 584.6 1116.0 583.5 C1121.1 582.5 1126.6 580.1 1131.4 579.3 C1136.1 578.6 1140.2 579.2 1144.6 579.1 C1148.9 579.1 1153.7 578.9 1157.7 579.1 C1161.7 579.3 1165.0 580.8 1168.7 580.2 C1172.3 579.7 1176.0 575.8 1179.7 575.8 C1183.3 575.8 1186.6 580.0 1190.6 580.2 C1194.7 580.5 1199.8 577.9 1203.8 577.4 C1207.8 576.8 1210.8 576.7 1214.8 576.9 C1218.8 577.1 1225.7 578.2 1227.9 578.5" fill="none" stroke="#7cc160" stroke-width="2"/>
<path d="M538.3 583.1 C539.9 583.0 543.5 582.0 547.6 582.4 C551.7 582.9 558.5 585.5 562.9 585.7 C567.3 585.9 569.5 584.2 573.9 583.5 C578.3 582.8 584.5 581.6 589.2 581.3 C594.0 581.1 598.4 582.2 602.4 582.0 C606.4 581.8 609.4 580.8 613.4 580.2 C617.4 579.7 622.5 579.5 626.6 578.7 C630.6 577.8 633.9 576.6 637.5 575.2 C641.2 573.7 644.5 570.6 648.5 569.9 C652.5 569.2 657.3 571.2 661.7 571.0 C666.1 570.8 670.8 569.7 674.8 568.8 C678.9 568.0 682.1 567.3 685.8 566.0 C689.5 564.6 692.9 562.3 696.8 560.9 C700.6 559.6 704.8 557.5 708.8 557.8 C712.9 558.1 717.1 562.0 720.9 562.7 C724.8 563.3 728.2 561.8 731.9 561.6 C735.5 561.3 738.8 560.3 742.9 561.1 C746.9 561.9 752.0 565.3 756.0 566.4 C760.0 567.5 763.0 567.2 767.0 567.7 C771.0 568.2 776.1 568.4 780.2 569.2 C784.2 570.1 787.1 572.4 791.1 573.0 C795.2 573.6 800.3 573.5 804.3 573.0 C808.3 572.4 811.6 570.7 815.3 569.7 C818.9 568.6 822.6 566.9 826.2 566.6 C829.9 566.4 833.2 567.9 837.2 568.2 C841.2 568.4 846.4 568.5 850.4 568.2 C854.4 567.8 857.3 566.1 861.4 566.0 C865.4 565.8 869.8 567.9 874.5 567.1 C879.3 566.3 886.0 562.2 890.0 561.1 C894.0 560.0 895.5 560.0 898.8 560.5 C902.1 560.9 905.7 563.8 909.7 563.8 C913.8 563.8 918.9 560.9 922.9 560.5 C926.9 560.0 929.9 560.4 933.9 560.9 C937.9 561.5 943.0 563.1 947.1 563.8 C951.1 564.4 954.4 565.2 958.0 564.9 C961.7 564.6 965.3 563.5 969.0 562.0 C972.7 560.5 975.6 557.3 980.0 556.1 C984.4 554.9 991.3 555.2 995.3 555.0 C999.4 554.7 1000.8 554.9 1004.1 554.5 C1007.4 554.2 1011.4 552.4 1015.1 552.8 C1018.7 553.2 1021.7 556.0 1026.1 556.7 C1030.4 557.5 1037.0 557.5 1041.4 557.2 C1045.8 556.8 1048.7 555.3 1052.4 554.5 C1056.0 553.8 1059.7 552.6 1063.4 552.8 C1067.0 553.0 1070.3 554.2 1074.3 555.6 C1078.4 557.1 1083.1 560.4 1087.5 561.6 C1091.9 562.7 1097.0 562.5 1100.7 562.7 C1104.3 562.8 1105.8 563.3 1109.4 562.7 C1113.1 562.0 1117.9 559.9 1122.6 558.7 C1127.4 557.5 1132.8 556.3 1138.0 555.6 C1143.1 554.9 1148.2 554.8 1153.3 554.5 C1158.5 554.3 1164.3 554.5 1168.7 553.9 C1173.1 553.3 1176.0 550.7 1179.7 551.0 C1183.3 551.3 1186.6 555.1 1190.6 555.6 C1194.7 556.2 1199.8 555.0 1203.8 554.3 C1207.8 553.7 1210.8 551.6 1214.8 551.7 C1218.8 551.8 1225.7 554.4 1227.9 555.0" fill="none" stroke="#f04a3e" stroke-width="2"/>
<path d="M244.30 525.50 A153.5 153.5 0 1 1 170.35 813.51 L211.54 738.59 A68.0 68.0 0 1 0 244.30 611.00 Z" fill="#2196f3" stroke="#fff" stroke-width="2" stroke-linejoin="round"/>
<path d="M170.35 813.51 A153.5 153.5 0 0 1 132.40 573.92 L194.73 632.45 A68.0 68.0 0 0 0 211.54 738.59 Z" fill="#4caf50" stroke="#fff" stroke-width="2" stroke-linejoin="round"/>
<path d="M132.40 573.92 A153.5 153.5 0 0 1 244.30 525.50 L244.30 611.00 A68.0 68.0 0 0 0 194.73 632.45 Z" fill="#f44336" stroke="#fff" stroke-width="2" stroke-linejoin="round"/></svg><div class="yl" style="right:1859px;top:162.2px">240 V</div>
<div class="yl" style="right:1859px;top:198.3px">230 V</div>
<div class="yl" style="right:1859px;top:234.4px">220 V</div>
<div class="yl" style="right:1859px;top:270.6px">210 V</div>
<div class="yl" style="right:1859px;top:306.7px">200 V</div>
<div class="xl" style="left:53.6px;top:318.0px">12:24:00</div>
<div class="xl" style="left:144.2px;top:318.0px">12:24:10</div>
<div class="xl" style="left:234.8px;top:318.0px">12:24:20</div>
<div class="xl" style="left:325.4px;top:318.0px">12:24:30</div>
<div class="xl" style="left:416.0px;top:318.0px">12:24:40</div>
<div class="xl" style="left:506.6px;top:318.0px">12:24:50</div>
<div class="yl" style="right:1207px;top:307.8px">0.00 kWh</div>
<div class="yl" style="right:1207px;top:286.8px">0.01 kWh</div>
<div class="yl" style="right:1207px;top:265.8px">0.02 kWh</div>
<div class="yl" style="right:1207px;top:244.8px">0.03 kWh</div>
<div class="yl" style="right:1207px;top:223.8px">0.04 kWh</div>
<div class="yl" style="right:1207px;top:202.8px">0.05 kWh</div>
<div class="yl" style="right:1207px;top:181.8px">0.06 kWh</div>
<div class="xl" style="left:768.3px;top:318px">16:00</div>
<div class="xl" style="left:856.6px;top:318px">20:00</div>
<div class="xl" style="left:944.9px;top:318px">00:00</div>
<div class="xl" style="left:1033.1px;top:318px">04:00</div>
<div class="xl" style="left:1121.4px;top:318px">08:00</div>
<div class="xl" style="left:1209.7px;top:318px">12:00</div>
<div class="yl" style="right:1386px;top:738.1px">0 A</div>
<div class="yl" style="right:1386px;top:707.0px">5 A</div>
<div class="yl" style="right:1386px;top:675.9px">10 A</div>
<div class="yl" style="right:1386px;top:644.8px">15 A</div>
<div class="yl" style="right:1386px;top:613.8px">20 A</div>
<div class="yl" style="right:1386px;top:582.7px">25 A</div>
<div class="yl" style="right:1386px;top:551.6px">30 A</div>
<div class="yl" style="right:1386px;top:520.5px">35 A</div>
<div class="xl" style="left:531.3px;top:749.5px">12:24:00</div>
<div class="xl" style="left:590.2px;top:749.5px">12:24:05</div>
<div class="xl" style="left:649.1px;top:749.5px">12:24:10</div>
<div class="xl" style="left:707.9px;top:749.5px">12:24:15</div>
<div class="xl" style="left:766.8px;top:749.5px">12:24:20</div>
<div class="xl" style="left:825.7px;top:749.5px">12:24:25</div>
<div class="xl" style="left:884.6px;top:749.5px">12:24:30</div>
<div class="xl" style="left:943.5px;top:749.5px">12:24:35</div>
<div class="xl" style="left:1002.3px;top:749.5px">12:24:40</div>
<div class="xl" style="left:1061.2px;top:749.5px">12:24:45</div>
<div class="xl" style="left:1120.1px;top:749.5px">12:24:50</div>
<div class="xl" style="left:1179.0px;top:749.5px">12:24:55</div>
<div class="t" style="left:34.0px;top:26.2px;font-size:22px;font-weight:400;color:#e2eaf3;letter-spacing:1.15px;-webkit-text-stroke:0.45px #e2eaf3;">Smart energy monitoring</div>
<div class="t" style="left:325.0px;top:27.7px;font-size:16px;font-weight:400;color:#d5dee9;letter-spacing:-0.04px;">Powered by ThingsBoard opensource IoT platform.</div>
<div class="btn" style="left:693px;top:18px;width:94px;height:36px"></div>
<div class="btn" style="left:824px;top:18px;width:70px;height:36px"></div>
<div class="t" style="left:540.0px;width:400px;text-align:center;top:29.6px;font-size:13px;font-weight:700;color:#eef3f8;">Try it now</div>
<div class="t" style="left:659.0px;width:400px;text-align:center;top:29.6px;font-size:13px;font-weight:700;color:#eef3f8;">Install</div>
<div class="t" style="left:795.5px;top:28.6px;font-size:14px;font-weight:400;color:#d5dee9;">OR</div>
<svg class="ic" style="left:1854px;top:25px" width="24" height="24" viewBox="-12 -12 24 24"><circle cx="0" cy="0" r="5" fill="#eee"/><line x1="7.30" y1="0.00" x2="10.80" y2="0.00" stroke="#eef3f8" stroke-width="1.8"/><line x1="5.16" y1="5.16" x2="7.64" y2="7.64" stroke="#eef3f8" stroke-width="1.8"/><line x1="0.00" y1="7.30" x2="0.00" y2="10.80" stroke="#eef3f8" stroke-width="1.8"/><line x1="-5.16" y1="5.16" x2="-7.64" y2="7.64" stroke="#eef3f8" stroke-width="1.8"/><line x1="-7.30" y1="0.00" x2="-10.80" y2="0.00" stroke="#eef3f8" stroke-width="1.8"/><line x1="-5.16" y1="-5.16" x2="-7.64" y2="-7.64" stroke="#eef3f8" stroke-width="1.8"/><line x1="-0.00" y1="-7.30" x2="-0.00" y2="-10.80" stroke="#eef3f8" stroke-width="1.8"/><line x1="5.16" y1="-5.16" x2="7.64" y2="-7.64" stroke="#eef3f8" stroke-width="1.8"/></svg>
<div class="t" style="left:33.0px;top:95.5px;font-size:23.5px;font-weight:700;color:#e2eaf3;transform:scaleX(1.008);transform-origin:0 50%;">Voltage</div>
<svg class="ic" style="left:603.0px;top:97.0px;" width="20" height="20" viewBox="0 0 24 24"><path d="M7 14H5v5h5v-2H7v-3zm-2-4h2V7h3V5H5v5zm12 7h-3v2h5v-5h-2v3zM14 5v2h3v3h2V5h-5z" fill="#e2eaf3"/></svg>
<div class="t" style="left:670.0px;top:95.5px;font-size:23.5px;font-weight:700;color:#e2eaf3;transform:scaleX(0.965);transform-origin:0 50%;">Energy consumption</div>
<svg class="ic" style="left:1240.0px;top:97.0px;" width="20" height="20" viewBox="0 0 24 24"><path d="M7 14H5v5h5v-2H7v-3zm-2-4h2V7h3V5H5v5zm12 7h-3v2h5v-5h-2v3zM14 5v2h3v3h2V5h-5z" fill="#e2eaf3"/></svg>
<div class="t" style="left:1302.0px;top:91.5px;font-size:23.5px;font-weight:700;color:#e2eaf3;transform:scaleX(0.971);transform-origin:0 50%;">Energy meters</div>
<svg class="ic" style="left:1815.0px;top:93.0px;" width="21" height="21" viewBox="0 0 24 24"><path d="M15.5 14h-.79l-.28-.27C15.41 12.59 16 11.11 16 9.5 16 5.910 13.09 3 9.5 3S3 5.91 3 9.5 5.91 16 9.5 16c1.61 0 3.09-.59 4.23-1.57l.27.28v.79l5 4.99L20.49 19l-4.99-5zm-6 0C7.01 14 5 11.99 5 9.5S7.01 5 9.5 5 14 7.01 14 9.5 11.99 14 9.5 14z" fill="#e2eaf3"/></svg>
<svg class="ic" style="left:1846.0px;top:92.0px;" width="22" height="22" viewBox="0 0 24 24"><path d="M10 18h5V5h-5v13zm-6 0h5V5H4v13zM16 5v13h5V5h-5z" fill="#e2eaf3"/></svg>
<svg class="ic" style="left:1880.0px;top:93.0px;" width="20" height="20" viewBox="0 0 24 24"><path d="M7 14H5v5h5v-2H7v-3zm-2-4h2V7h3V5H5v5zm12 7h-3v2h5v-5h-2v3zM14 5v2h3v3h2V5h-5z" fill="#e2eaf3"/></svg>
<div class="t" style="left:33.0px;top:455.0px;font-size:23.5px;font-weight:700;color:#e2eaf3;transform:scaleX(0.965);transform-origin:0 50%;">Energy consumption</div>
<svg class="ic" style="left:443.0px;top:456.0px;" width="20" height="20" viewBox="0 0 24 24"><path d="M7 14H5v5h5v-2H7v-3zm-2-4h2V7h3V5H5v5zm12 7h-3v2h5v-5h-2v3zM14 5v2h3v3h2V5h-5z" fill="#e2eaf3"/></svg>
<div class="t" style="left:511.0px;top:455.0px;font-size:23.5px;font-weight:700;color:#e2eaf3;transform:scaleX(0.974);transform-origin:0 50%;">Amperage</div>
<svg class="ic" style="left:1240.0px;top:456.0px;" width="20" height="20" viewBox="0 0 24 24"><path d="M7 14H5v5h5v-2H7v-3zm-2-4h2V7h3V5H5v5zm12 7h-3v2h5v-5h-2v3zM14 5v2h3v3h2V5h-5z" fill="#e2eaf3"/></svg>
<div class="t" style="left:1302.0px;top:450.5px;font-size:23.5px;font-weight:700;color:#e2eaf3;transform:scaleX(0.98);transform-origin:0 50%;">Alarms</div>
<svg class="ic" style="left:1783.4px;top:452.0px;" width="21" height="21" viewBox="0 0 24 24"><path d="M15.5 14h-.79l-.28-.27C15.41 12.59 16 11.11 16 9.5 16 5.910 13.09 3 9.5 3S3 5.91 3 9.5 5.91 16 9.5 16c1.61 0 3.09-.59 4.23-1.57l.27.28v.79l5 4.99L20.49 19l-4.99-5zm-6 0C7.01 14 5 11.99 5 9.5S7.01 5 9.5 5 14 7.01 14 9.5 11.99 14 9.5 14z" fill="#e2eaf3"/></svg>
<svg class="ic" style="left:1814.4px;top:451.0px;" width="22" height="22" viewBox="0 0 24 24"><path d="M10 18h4v-2h-4v2zM3 6v2h18V6H3zm3 7h12v-2H6v2z" fill="#e2eaf3"/></svg>
<svg class="ic" style="left:1846.6px;top:451.0px;" width="22" height="22" viewBox="0 0 24 24"><path d="M10 18h5V5h-5v13zm-6 0h5V5H4v13zM16 5v13h5V5h-5z" fill="#e2eaf3"/></svg>
<svg class="ic" style="left:1879.3px;top:452.0px;" width="20" height="20" viewBox="0 0 24 24"><path d="M7 14H5v5h5v-2H7v-3zm-2-4h2V7h3V5H5v5zm12 7h-3v2h5v-5h-2v3zM14 5v2h3v3h2V5h-5z" fill="#e2eaf3"/></svg>
<div class="t rot" style="left:-75px;top:233px;width:200px;text-align:center;font-size:11px;font-weight:700;color:#e2eaf3">Voltage, V</div>
<div class="t rot" style="left:562px;top:245px;width:200px;text-align:center;font-size:11px;font-weight:700;color:#e2eaf3">Energy consumption, kWh</div>
<div class="t rot" style="left:402.5px;top:629px;width:200px;text-align:center;font-size:11px;font-weight:700;color:#e2eaf3">Amperage, A</div>
<div class="t" style="right:1303.5px;top:342.1px;font-size:12px;font-weight:700;color:#f26b3a;">avg</div>
<div class="lg" style="left:21px;top:366.0px;background:#3a9cf3"></div>
<div class="t" style="left:49.0px;top:360.8px;font-size:12px;font-weight:400;color:#dfe7f0;">Smart Meter C</div>
<div class="t" style="right:1303.5px;top:360.8px;font-size:12px;font-weight:400;color:#dfe7f0;letter-spacing:-0.2px;">208.97 V</div>
<div class="lg" style="left:21px;top:386.0px;background:#5db85c"></div>
<div class="t" style="left:49.0px;top:380.8px;font-size:12px;font-weight:400;color:#dfe7f0;">Smart Meter B</div>
<div class="t" style="right:1303.5px;top:380.8px;font-size:12px;font-weight:400;color:#dfe7f0;letter-spacing:-0.2px;">223.28 V</div>
<div class="lg" style="left:21px;top:406.0px;background:#ee5344"></div>
<div class="t" style="left:49.0px;top:400.8px;font-size:12px;font-weight:400;color:#dfe7f0;">Smart Meter A</div>
<div class="t" style="right:1303.5px;top:400.8px;font-size:12px;font-weight:400;color:#dfe7f0;letter-spacing:-0.2px;">231.67 V</div>
<div class="t" style="right:666.5px;top:342.1px;font-size:12px;font-weight:700;color:#f26b3a;">avg</div>
<div class="lg" style="left:658px;top:366.0px;background:#3a9cf3"></div>
<div class="t" style="left:686.0px;top:360.8px;font-size:12px;font-weight:400;color:#dfe7f0;">Smart Meter C</div>
<div class="t" style="right:666.5px;top:360.8px;font-size:12px;font-weight:400;color:#dfe7f0;letter-spacing:-0.2px;">0.02 kWh</div>
<div class="lg" style="left:658px;top:386.0px;background:#5db85c"></div>
<div class="t" style="left:686.0px;top:380.8px;font-size:12px;font-weight:400;color:#dfe7f0;">Smart Meter B</div>
<div class="t" style="right:666.5px;top:380.8px;font-size:12px;font-weight:400;color:#dfe7f0;letter-spacing:-0.2px;">0.01 kWh</div>
<div class="lg" style="left:658px;top:406.0px;background:#ee5344"></div>
<div class="t" style="left:686.0px;top:400.8px;font-size:12px;font-weight:400;color:#dfe7f0;">Smart Meter A</div>
<div class="t" style="right:666.5px;top:400.8px;font-size:12px;font-weight:400;color:#dfe7f0;letter-spacing:-0.2px;">0.01 kWh</div>
<div class="t" style="right:666.0px;top:773.0px;font-size:12px;font-weight:700;color:#f26b3a;">avg</div>
<div class="lg" style="left:499px;top:796.8px;background:#3a9cf3"></div>
<div class="t" style="left:527.0px;top:791.6px;font-size:12px;font-weight:400;color:#dfe7f0;">Smart Meter C</div>
<div class="t" style="right:666.0px;top:791.6px;font-size:12px;font-weight:400;color:#dfe7f0;letter-spacing:-0.2px;">17.32 A</div>
<div class="lg" style="left:499px;top:816.8px;background:#5db85c"></div>
<div class="t" style="left:527.0px;top:811.6px;font-size:12px;font-weight:400;color:#dfe7f0;">Smart Meter B</div>
<div class="t" style="right:666.0px;top:811.6px;font-size:12px;font-weight:400;color:#dfe7f0;letter-spacing:-0.2px;">8.24 A</div>
<div class="lg" style="left:499px;top:836.9px;background:#ee5344"></div>
<div class="t" style="left:527.0px;top:831.7px;font-size:12px;font-weight:400;color:#dfe7f0;">Smart Meter A</div>
<div class="t" style="right:666.0px;top:831.7px;font-size:12px;font-weight:400;color:#dfe7f0;letter-spacing:-0.2px;">3.34 A</div>
<svg class="ic" style="left:670.2px;top:142.3px;" width="23" height="23" viewBox="0 0 24 24"><path d="M11.99 2C6.47 2 2 6.48 2 12s4.47 10 9.99 10C17.52 22 22 17.52 22 12S17.52 2 11.99 2zM12 20c-4.42 0-8-3.58-8-8s3.58-8 8-8 8 3.58 8 8-3.58 8-8 8zm.5-13H11v6l5.25 3.15.75-1.23-4.5-2.67z" fill="#c9d4e0"/></svg>
<div class="t" style="left:698.0px;top:147.1px;font-size:14px;font-weight:400;color:#c9d4e0;letter-spacing:-0.15px;">Realtime - last day</div>
<svg class="ic" style="left:1302.3px;top:497.2px;" width="23" height="23" viewBox="0 0 24 24"><path d="M11.99 2C6.47 2 2 6.48 2 12s4.47 10 9.99 10C17.52 22 22 17.52 22 12S17.52 2 11.99 2zM12 20c-4.42 0-8-3.58-8-8s3.58-8 8-8 8 3.58 8 8-3.58 8-8 8zm.5-13H11v6l5.25 3.15.75-1.23-4.5-2.67z" fill="#c9d4e0"/></svg>
<div class="t" style="left:1330.0px;top:502.1px;font-size:14px;font-weight:400;color:#c9d4e0;letter-spacing:-0.15px;">Realtime - last day</div>
<div class="t" style="left:1299.0px;top:169.6px;font-size:12px;font-weight:700;color:#e2eaf3;">Name</div>
<svg class="ic" style="left:1335.5px;top:168.5px;" width="15" height="15" viewBox="0 0 24 24"><path d="M20 12l-1.41-1.41L13 16.17V4h-2v12.17l-5.58-5.59L4 12l8 8 8-8z" fill="#e2eaf3"/></svg>
<div class="t" style="left:1409.5px;top:169.6px;font-size:12px;font-weight:700;color:#e2eaf3;">Label</div>
<div class="t" style="left:1500.5px;top:169.6px;font-size:12px;font-weight:700;color:#e2eaf3;letter-spacing:-0.3px;">Voltage, V</div>
<div class="t" style="left:1631.8px;top:169.6px;font-size:12px;font-weight:700;color:#e2eaf3;letter-spacing:-0.3px;">Amperage, V</div>
<div class="t" style="left:1779.6px;top:169.6px;font-size:12px;font-weight:700;color:#e2eaf3;letter-spacing:-0.3px;">Power, W</div>
<div class="hl" style="left:1287px;top:204.8px;width:618px"></div>
<div class="hl" style="left:1287px;top:256.6px;width:618px"></div>
<div class="hl" style="left:1287px;top:308.5px;width:618px"></div>
<div class="hl" style="left:1287px;top:360.4px;width:618px"></div>
<div class="hl" style="left:1287px;top:364.8px;width:618px"></div>
<div class="t" style="left:1299.0px;top:225.1px;font-size:13px;font-weight:400;color:#dfe7f0;letter-spacing:-0.05px;">Smart Meter C</div>
<div class="t" style="left:1409.5px;top:225.1px;font-size:13px;font-weight:400;color:#dfe7f0;letter-spacing:-0.05px;">3rd Floor</div>
<div class="t" style="left:1500.5px;top:225.1px;font-size:13px;font-weight:400;color:#dfe7f0;letter-spacing:-0.05px;">211.55</div>
<div class="t" style="left:1631.8px;top:225.1px;font-size:13px;font-weight:400;color:#dfe7f0;letter-spacing:-0.05px;">17.22</div>
<div class="t" style="left:1779.6px;top:225.1px;font-size:13px;font-weight:400;color:#dfe7f0;letter-spacing:-0.05px;">3642.89</div>
<div class="t" style="left:1299.0px;top:277.1px;font-size:13px;font-weight:400;color:#dfe7f0;letter-spacing:-0.05px;">Smart Meter B</div>
<div class="t" style="left:1409.5px;top:277.1px;font-size:13px;font-weight:400;color:#dfe7f0;letter-spacing:-0.05px;">2nd Floor</div>
<div class="t" style="left:1500.5px;top:277.1px;font-size:13px;font-weight:400;color:#dfe7f0;letter-spacing:-0.05px;">234.12</div>
<div class="t" style="left:1631.8px;top:277.1px;font-size:13px;font-weight:400;color:#dfe7f0;letter-spacing:-0.05px;">9.77</div>
<div class="t" style="left:1779.6px;top:277.1px;font-size:13px;font-weight:400;color:#dfe7f0;letter-spacing:-0.05px;">2287.35</div>
<div class="t" style="left:1299.0px;top:329.1px;font-size:13px;font-weight:400;color:#dfe7f0;letter-spacing:-0.05px;">Smart Meter A</div>
<div class="t" style="left:1409.5px;top:329.1px;font-size:13px;font-weight:400;color:#dfe7f0;letter-spacing:-0.05px;">1st Floor</div>
<div class="t" style="left:1500.5px;top:329.1px;font-size:13px;font-weight:400;color:#dfe7f0;letter-spacing:-0.05px;">235.68</div>
<div class="t" style="left:1631.8px;top:329.1px;font-size:13px;font-weight:400;color:#dfe7f0;letter-spacing:-0.05px;">3.67</div>
<div class="t" style="left:1779.6px;top:329.1px;font-size:13px;font-weight:400;color:#dfe7f0;letter-spacing:-0.05px;">864.95</div>
<div class="t" style="left:1472.5px;top:387.1px;font-size:12px;font-weight:400;color:#aebccb;letter-spacing:-0.15px;">Items per page:</div>
<div class="t" style="left:1563.3px;top:387.1px;font-size:12px;font-weight:400;color:#c9d4e0;">10</div>
<div class="hl" style="left:1563px;top:405.5px;width:56px;background:rgba(255,255,255,0.35)"></div>
<svg class="ic" style="left:1605px;top:390.0px" width="10" height="6" viewBox="0 0 10 5"><path d="M0 0L5 5L10 0z" fill="#aebccb"/></svg>
<div class="t" style="left:1655.5px;top:387.1px;font-size:12px;font-weight:400;color:#aebccb;letter-spacing:-0.1px;">1 – 3 of 3</div>
<svg class="ic" style="left:1744.0px;top:381.0px;" width="28" height="28" viewBox="0 0 24 24"><path d="M18.41 16.59L13.82 12l4.59-4.59L17 6l-6 6 6 6zM6 6h2v12H6z" fill="#3a5574"/></svg>
<svg class="ic" style="left:1784.0px;top:381.0px;" width="28" height="28" viewBox="0 0 24 24"><path d="M15.41 7.41L14 6l-6 6 6 6 1.41-1.41L10.83 12z" fill="#3a5574"/></svg>
<svg class="ic" style="left:1824.0px;top:381.0px;" width="28" height="28" viewBox="0 0 24 24"><path d="M10 6L8.59 7.41 13.17 12l-4.58 4.59L10 18l6-6z" fill="#3a5574"/></svg>
<svg class="ic" style="left:1864.0px;top:381.0px;" width="28" height="28" viewBox="0 0 24 24"><path d="M5.59 7.41L10.18 12l-4.59 4.59L7 18l6-6-6-6zM16 6h2v12h-2z" fill="#3a5574"/></svg>
<div class="cb" style="left:1299px;top:547px"></div>
<div class="t" style="left:1334.0px;top:548.6px;font-size:12px;font-weight:700;color:#e2eaf3;letter-spacing:-0.3px;">Start time</div>
<svg class="ic" style="left:1391.5px;top:547.5px;" width="15" height="15" viewBox="0 0 24 24"><path d="M20 12l-1.41-1.41L13 16.17V4h-2v12.17l-5.58-5.59L4 12l8 8 8-8z" fill="#e2eaf3"/></svg>
<div class="t" style="left:1414.8px;top:548.6px;font-size:12px;font-weight:700;color:#e2eaf3;letter-spacing:-0.3px;">Originator</div>
<div class="t" style="left:1497.0px;top:548.6px;font-size:12px;font-weight:700;color:#e2eaf3;letter-spacing:-0.3px;">Type</div>
<div class="t" style="left:1627.2px;top:548.6px;font-size:12px;font-weight:700;color:#e2eaf3;letter-spacing:-0.3px;">Severity</div>
<div class="t" style="left:1697.7px;top:548.6px;font-size:12px;font-weight:700;color:#e2eaf3;letter-spacing:-0.3px;">Status</div>
<div class="hl" style="left:1287px;top:583.5px;width:619px"></div>
<div class="hl" style="left:1287px;top:635.7px;width:619px"></div>
<div class="cb" style="left:1299px;top:603px"></div>
<div class="t" style="left:1334.0px;top:597.0px;font-size:13px;font-weight:400;color:#dfe7f0;">2022-02-10</div>
<div class="t" style="left:1334.0px;top:612.0px;font-size:13px;font-weight:400;color:#dfe7f0;">12:24:56</div>
<div class="t" style="left:1415.0px;top:597.0px;font-size:13px;font-weight:400;color:#dfe7f0;">Smart</div>
<div class="t" style="left:1415.0px;top:612.0px;font-size:13px;font-weight:400;color:#dfe7f0;">Meter A</div>
<div class="t" style="left:1497.0px;top:604.3px;font-size:13px;font-weight:400;color:#dfe7f0;">High Voltage Alarm</div>
<div class="t" style="left:1627.2px;top:604.6px;font-size:12.5px;font-weight:700;color:#dfe7f0;">Major</div>
<div class="t" style="left:1697.7px;top:597.0px;font-size:13px;font-weight:400;color:#dfe7f0;">Active</div>
<div class="t" style="left:1697.7px;top:612.0px;font-size:13px;font-weight:400;color:#dfe7f0;">Unacknowledged</div>
<svg class="ic" style="left:1810.6px;top:600.5px;" width="22" height="22" viewBox="0 0 24 24"><path d="M6 10c-1.1 0-2 .9-2 2s.9 2 2 2 2-.9 2-2-.9-2-2-2zm12 0c-1.1 0-2 .9-2 2s.9 2 2 2 2-.9 2-2-.9-2-2-2zm-6 0c-1.1 0-2 .9-2 2s.9 2 2 2 2-.9 2-2-.9-2-2-2z" fill="#c9d4e0"/></svg>
<svg class="ic" style="left:1848.4px;top:598.5px;" width="26" height="26" viewBox="0 0 24 24"><path d="M9 16.17L4.83 12l-1.42 1.41L9 19 21 7l-1.41-1.41z" fill="#c9d4e0"/></svg>
<div style="position:absolute;left:1880px;top:590px;width:26px;height:44px;overflow:hidden"><svg width="26" height="26" viewBox="0 0 24 24" style="position:absolute;left:8px;top:9px"><path d="M19 6.41L17.59 5 12 10.59 6.41 5 5 6.41 10.59 12 5 17.59 6.41 19 12 13.41 17.59 19 19 17.59 13.41 12z" fill="#c9d4e0"/></svg></div>
<div style="position:absolute;left:1287px;top:781px;width:619px;height:15px;background:#f1f1f1"></div>
<div style="position:absolute;left:1302px;top:783px;width:564px;height:11px;background:#c4c2bf"></div>
<svg class="ic" style="left:1291px;top:784px" width="8" height="9" viewBox="0 0 8 9"><path d="M6 0.5L1.5 4.5L6 8.5z" fill="#8a8a8a"/></svg>
<svg class="ic" style="left:1895px;top:784px" width="8" height="9" viewBox="0 0 8 9"><path d="M2 0.5L6.5 4.5L2 8.5z" fill="#8a8a8a"/></svg>
<div class="t" style="left:1472.5px;top:819.1px;font-size:12px;font-weight:400;color:#aebccb;letter-spacing:-0.15px;">Items per page:</div>
<div class="t" style="left:1563.3px;top:819.1px;font-size:12px;font-weight:400;color:#c9d4e0;">10</div>
<div class="hl" style="left:1563px;top:837.5px;width:56px;background:rgba(255,255,255,0.35)"></div>
<svg class="ic" style="left:1605px;top:822.0px" width="10" height="6" viewBox="0 0 10 5"><path d="M0 0L5 5L10 0z" fill="#aebccb"/></svg>
<div class="t" style="left:1655.5px;top:819.1px;font-size:12px;font-weight:400;color:#aebccb;letter-spacing:-0.1px;">1 – 1 of 1</div>
<svg class="ic" style="left:1744.0px;top:813.0px;" width="28" height="28" viewBox="0 0 24 24"><path d="M18.41 16.59L13.82 12l4.59-4.59L17 6l-6 6 6 6zM6 6h2v12H6z" fill="#3a5574"/></svg>
<svg class="ic" style="left:1784.0px;top:813.0px;" width="28" height="28" viewBox="0 0 24 24"><path d="M15.41 7.41L14 6l-6 6 6 6 1.41-1.41L10.83 12z" fill="#3a5574"/></svg>
<svg class="ic" style="left:1824.0px;top:813.0px;" width="28" height="28" viewBox="0 0 24 24"><path d="M10 6L8.59 7.41 13.17 12l-4.58 4.59L10 18l6-6z" fill="#3a5574"/></svg>
<svg class="ic" style="left:1864.0px;top:813.0px;" width="28" height="28" viewBox="0 0 24 24"><path d="M5.59 7.41L10.18 12l-4.59 4.59L7 18l6-6-6-6zM16 6h2v12h-2z" fill="#3a5574"/></svg>
<div class="t" style="left:1722.5px;top:847.7px;font-size:12px;color:#dfe7f0;letter-spacing:-0.22px">Powered by <b style="color:#2b7bd6">Thingsboard v.3.3.4</b></div>
<div class="pl" style="left:140.4px;top:541.3px;width:131.6px;height:57.40000000000009px"><div style="position:absolute;left:0;width:100%;top:10.2px;text-align:center;font-size:16px;line-height:19px">Smart Meter A</div><div style="position:absolute;left:0;width:100%;top:29.2px;text-align:center;font-size:16px;line-height:19px">13%</div></div>
<div class="pl" style="left:64.2px;top:677.4px;width:131.60000000000002px;height:57.10000000000002px"><div style="position:absolute;left:0;width:100%;top:10.1px;text-align:center;font-size:16px;line-height:19px">Smart Meter B</div><div style="position:absolute;left:0;width:100%;top:29.1px;text-align:center;font-size:16px;line-height:19px">29%</div></div>
<div class="pl" style="left:314.3px;top:690px;width:131.3px;height:57.700000000000045px"><div style="position:absolute;left:0;width:100%;top:10.4px;text-align:center;font-size:16px;line-height:19px">Smart Meter C</div><div style="position:absolute;left:0;width:100%;top:29.4px;text-align:center;font-size:16px;line-height:19px">58%</div></div></body></html>
